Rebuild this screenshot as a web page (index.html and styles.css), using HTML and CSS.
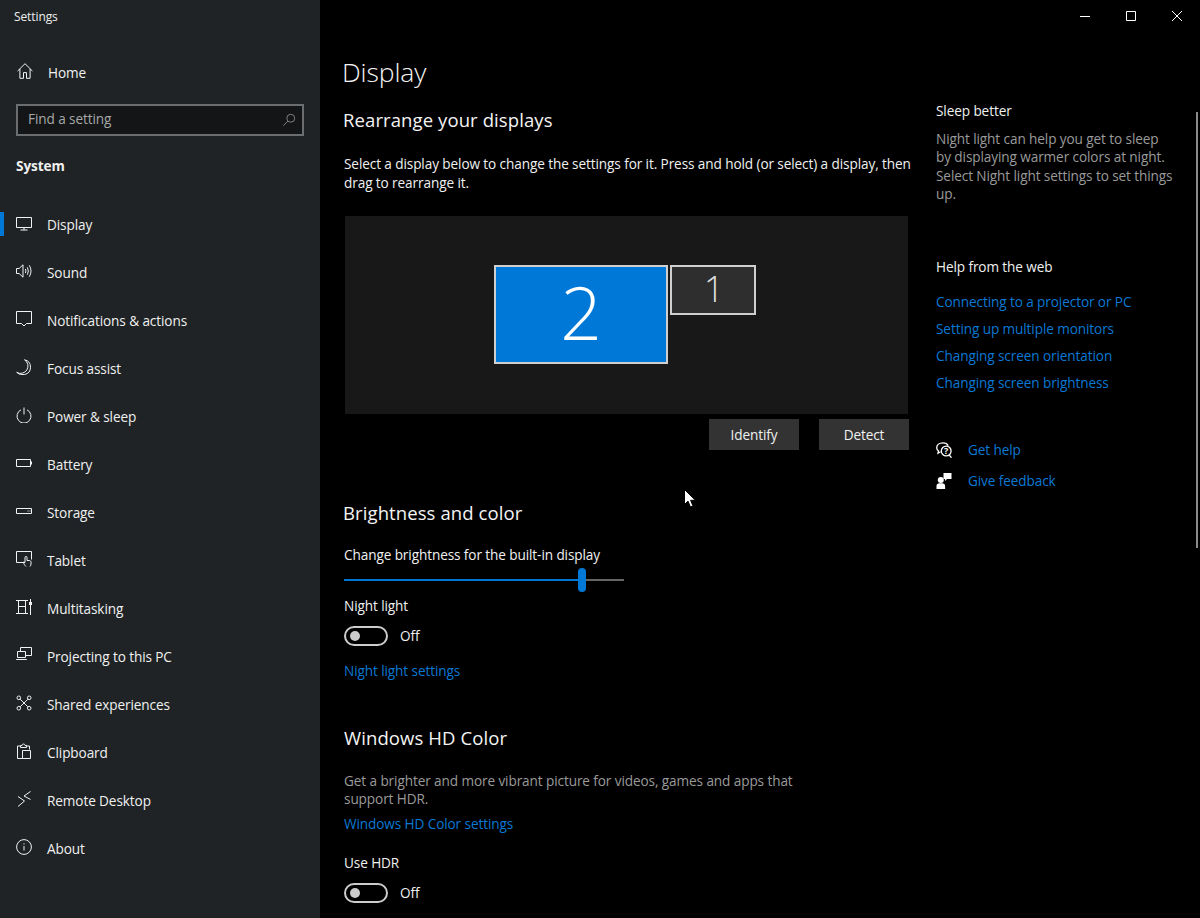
FILE: index.html
```html
<!DOCTYPE html>
<html lang="en">
<head>
<meta charset="utf-8">
<title>Settings</title>
<link rel="stylesheet" href="styles.css">
</head>
<body>
<div class="window">
  <aside class="sidebar">
    <div class="app-title">Settings</div>
    <a class="nav-item home">
      <svg class="ic" viewBox="0 0 16 16"><path d="M.6 8 8 .7 15.4 8M2.900 6v9.300h3.600V9.600h3v5.700h3.600V6"/></svg>
      <span>Home</span>
    </a>
    <div class="search">
      <span>Find a setting</span>
      <svg class="search-ic" viewBox="0 0 16 16"><circle cx="10" cy="6" r="4.500"/><path d="M6.700 9.300 1.500 14.500"/></svg>
    </div>
    <div class="group">System</div>
    <nav class="nav">
      <a class="nav-item active">
        <svg class="ic" viewBox="0 0 16 16"><path d="M.5 2.500h15v10H.5zM8 12.500v2.500M4.500 15h7"/></svg>
        <span>Display</span>
      </a>
      <a class="nav-item">
        <svg class="ic" viewBox="0 0 16 16"><path d="M.5 5.500h2.600L7 1.800v12.400L3.100 10.500H.5zM9.400 6q1.100 2 0 4M11.300 4.300q2.200 3.700 0 7.400M13.300 2.300q3.400 5.700 0 11.400"/></svg>
        <span>Sound</span>
      </a>
      <a class="nav-item">
        <svg class="ic" viewBox="0 0 16 16"><path d="M.5.500h15v12h-5L8 15l-2.500-2.500h-5z"/></svg>
        <span>Notifications &amp; actions</span>
      </a>
      <a class="nav-item">
        <svg class="ic" viewBox="0 0 16 16"><path d="M8.500.8A7.300 7.300 0 0 1 .7 13.300 7.500 7.500 0 0 0 8.500 15.500 7.500 7.500 0 0 0 8.500.8Z"/></svg>
        <span>Focus assist</span>
      </a>
      <a class="nav-item">
        <svg class="ic" viewBox="0 0 16 16"><path d="M5 2.800a7 7 0 1 0 6 0M8 .5v7"/></svg>
        <span>Power &amp; sleep</span>
      </a>
      <a class="nav-item">
        <svg class="ic" viewBox="0 0 16 16"><path d="M.5 4.500h14v7H.5zM15.500 6.500v3"/></svg>
        <span>Battery</span>
      </a>
      <a class="nav-item">
        <svg class="ic" viewBox="0 0 16 16"><path d="M.5 5.500h15v5H.5zM11.500 8h1M13.500 8h1"/></svg>
        <span>Storage</span>
      </a>
      <a class="nav-item">
        <svg class="ic" viewBox="0 0 16 16"><path d="M8.500 11.500H.5v-11h15v8M10 15.500c-1.200-1-2.500-3-2.500-4.500l1.500.5V6.500a1 1 0 0 1 2 0v3h2.500c1 0 1.500.8 1.500 1.500v2c0 1-.5 1.800-1 2.500"/></svg>
        <span>Tablet</span>
      </a>
      <a class="nav-item">
        <svg class="ic" viewBox="0 0 16 16"><path d="M0 1.500h12M0 14.500h12M2.500 1.500v13M9.500 1.500v13M2.500 7.500h7M14.500 0v16"/><rect class="ic-fill" x="13" y="3" width="3" height="3"/></svg>
        <span>Multitasking</span>
      </a>
      <a class="nav-item">
        <svg class="ic" viewBox="0 0 16 16"><path d="M4.500 4V.5h11v8H10M1.500 4.500h8v6h-8zM.2 12.500h10.600"/></svg>
        <span>Projecting to this PC</span>
      </a>
      <a class="nav-item">
        <svg class="ic" viewBox="0 0 16 16"><circle cx="2.800" cy="2.800" r="1.800"/><circle cx="13.200" cy="2.800" r="1.800"/><circle cx="2.800" cy="13.200" r="1.800"/><circle cx="13.200" cy="13.200" r="1.800"/><path d="M4.200 4.200l7.600 7.600M11.800 4.200l-7.600 7.600"/></svg>
        <span>Shared experiences</span>
      </a>
      <a class="nav-item">
        <svg class="ic" viewBox="0 0 16 16"><path d="M6.500 15.500H1.500V3h3M10 3h3.500v3.500M4.500 4.500V2.500h1.500a1.500 1.500 0 0 1 3 0h1.500v2zM6.500 7.500h8v8h-8z"/></svg>
        <span>Clipboard</span>
      </a>
      <a class="nav-item">
        <svg class="ic" viewBox="0 0 16 16"><path d="M2 5.500 8.500 10 2 15.500M14.500.5 8 5l6.500 3.500"/></svg>
        <span>Remote Desktop</span>
      </a>
      <a class="nav-item">
        <svg class="ic" viewBox="0 0 16 16"><circle cx="8" cy="8" r="7.400"/><path d="M8 7v4.500M8 4.300v1.200"/></svg>
        <span>About</span>
      </a>
    </nav>
  </aside>

  <main class="main">
    <section class="content">
      <h1 class="page-title">Display</h1>
      <h2 class="heading rearrange">Rearrange your displays</h2>
      <p class="text desc">Select a display below to change the settings for it. Press and hold (or select) a display, then drag to rearrange it.</p>
      <div class="canvas">
        <div class="monitor big">2</div>
        <div class="monitor small">1</div>
      </div>
      <div class="actions">
        <button class="btn">Identify</button>
        <button class="btn">Detect</button>
      </div>
      <h2 class="heading brightness">Brightness and color</h2>
      <div class="text label-b">Change brightness for the built-in display</div>
      <div class="slider"><div class="slider-fill"></div><div class="slider-thumb"></div><div class="slider-rest"></div></div>
      <div class="text label-n">Night light</div>
      <div class="toggle-row"><span class="toggle"><span class="knob"></span></span><span class="text">Off</span></div>
      <a class="link nl-link">Night light settings</a>
      <h2 class="heading hd">Windows HD Color</h2>
      <p class="muted hd-desc">Get a brighter and more vibrant picture for videos, games and apps that support HDR.</p>
      <a class="link hd-link">Windows HD Color settings</a>
      <div class="text label-h">Use HDR</div>
      <div class="toggle-row"><span class="toggle"><span class="knob"></span></span><span class="text">Off</span></div>
    </section>
    <aside class="side">
      <div class="text side-head">Sleep better</div>
      <p class="muted side-desc">Night light can help you get to sleep by displaying warmer colors at night. Select Night light settings to set things up.</p>
      <div class="text side-head web">Help from the web</div>
      <ul class="links">
        <li><a class="link">Connecting to a projector or PC</a></li>
        <li><a class="link">Setting up multiple monitors</a></li>
        <li><a class="link">Changing screen orientation</a></li>
        <li><a class="link">Changing screen brightness</a></li>
      </ul>
      <div class="help-row first">
        <svg class="help-ic" viewBox="0 0 16 16"><path class="o" d="M7 .8C3.200.8.700 3 .700 5.700c0 1.400.7 2.500 1.800 3.300L2 11.200l2.600-1.400"/><path class="o" d="M7 .8c2.300 0 4.300 1 5.200 2.800"/><circle class="o" cx="10.200" cy="9" r="4.900"/><path class="o" d="M13.200 13l2.300 2.700"/><text x="10.200" y="12.200" class="q">?</text></svg>
        <a class="link">Get help</a>
      </div>
      <div class="help-row">
        <svg class="help-ic" viewBox="0 0 16 16"><path class="f" d="M7.500 0h8v6H11L9 8V6H7.500z"/><circle class="f" cx="4.800" cy="7" r="3"/><path class="f" d="M.5 16v-3c0-1.700 1.300-2.700 2.800-2.700h3c1.500 0 2.800 1 2.800 2.700v3z"/></svg>
        <a class="link">Give feedback</a>
      </div>
    </aside>
  </main>

  <div class="controls">
    <svg viewBox="0 0 46 32" class="ctl"><path d="M18 16.500h10"/></svg>
    <svg viewBox="0 0 46 32" class="ctl"><path d="M18.500 11.500h9v9h-9z"/></svg>
    <svg viewBox="0 0 46 32" class="ctl"><path d="M18 11l10 10M28 11 18 21"/></svg>
  </div>
  <div class="scrollbar"></div>
  <svg class="cursor" viewBox="0 0 12 19"><path d="M.5.5v15l3.500-3.400 2.400 5.800 2.600-1-2.400-5.600h4.800z"/></svg>
</div>
</body>
</html>
```

FILE: styles.css
```css
* { box-sizing: border-box; }
html, body { margin: 0; height: 100%; background: #000; overflow: hidden; }
body { font-family: "Open Sans", "Noto Sans", sans-serif; color: #fff; letter-spacing: -0.1px; }
a { text-decoration: none; color: inherit; }
p, h1, h2, ul { margin: 0; padding: 0; }
ul { list-style: none; }

.window { position: relative; display: flex; width: 1200px; height: 918px; overflow: hidden; }

.sidebar { width: 320px; flex: none; background: #1f2325; display: flex; flex-direction: column; }
.app-title { font-size: 12px; line-height: 16px; padding: 9px 0 0 14px; height: 48px; color: #eee; }
.nav-item { display: flex; align-items: center; height: 48px; padding-left: 16px; font-size: 13.6px; color: #f0f0f0; position: relative; }
.nav-item span { margin-left: 15px; }
.ic { width: 16px; height: 16px; flex: none; margin-top: -2px; fill: none; stroke: #f2f2f2; stroke-width: 1; }
.ic-fill { fill: #f2f2f2; stroke: none; }
.home { padding-left: 17px; }
.search { margin: 8px 16px 0; height: 32px; border: 2px solid #6b6e70; background: #131517; display: flex; align-items: center; justify-content: space-between; padding: 0 6px 3px 10px; font-size: 13.6px; color: #a8a8a8; }
.search-ic { width: 14px; height: 14px; margin-top: 3px; fill: none; stroke: #8f8f8f; stroke-width: 1; }
.group { font-size: 13.6px; font-weight: 700; line-height: 20px; padding: 20px 0 0 16px; height: 64px; color: #f0f0f0; }
.nav { display: flex; flex-direction: column; }
.active::before { content: ""; position: absolute; left: 0; top: 12px; width: 4px; height: 24px; background: #0078d7; }

.main { flex: 1; display: flex; padding: 52px 0 0 24px; min-width: 0; }
.content { width: 565px; flex: none; }
.page-title { font-size: 26.5px; font-weight: 300; line-height: 40px; margin-left: -2px; color: #f4f4f4; }
.heading { font-size: 18.5px; font-weight: 400; line-height: 28px; color: #f4f4f4; letter-spacing: 0.1px; }
.rearrange { margin: 14px 0 0 -1px; }
.text { font-size: 13.6px; line-height: 20px; color: #f0f0f0; }
.desc { line-height: 19px; margin-top: 20px; margin-right: -6px; }
.canvas { margin: 24px 0 0 1px; width: 563px; height: 198px; background: #181818; display: flex; align-items: flex-start; gap: 2px; padding: 49px 0 0 149px; }
.monitor { border: 2px solid #cfcfcf; display: flex; align-items: center; justify-content: center; font-weight: 300; line-height: 1; }
.big { width: 174px; height: 99px; background: #0078d7; font-size: 73px; padding-bottom: 6px; }
.small { width: 86px; height: 50px; background: #2e2e2e; font-size: 36px; color: #ddd; padding: 0 0 2px 2px; }
.actions { display: flex; justify-content: flex-end; gap: 20px; margin-top: 5px; }
.btn { width: 90px; height: 31px; border: 0; padding: 0; background: #333; color: #f0f0f0; font: inherit; font-size: 13.6px; letter-spacing: -0.1px; }
.brightness { margin: 49px 0 0 -1px; }
.label-b { margin-top: 18px; }
.slider { display: flex; align-items: center; width: 280px; height: 24px; margin-top: 3px; }
.slider-fill { width: 234px; height: 2px; background: #0078d7; }
.slider-thumb { width: 8px; height: 24px; border-radius: 4px; background: #0078d7; }
.slider-rest { flex: 1; height: 2px; background: #666; }
.label-n { margin-top: 4px; }
.toggle-row { display: flex; align-items: center; gap: 12px; height: 20px; margin-top: 10px; }
.toggle { width: 44px; height: 20px; border: 2px solid #ccc; border-radius: 10px; display: flex; align-items: center; padding-left: 4px; }
.knob { width: 10px; height: 10px; border-radius: 50%; background: #ccc; }
.link { display: block; font-size: 13.6px; line-height: 20px; color: #0a78d4; }
.nl-link { margin-top: 15px; }
.hd { margin-top: 43px; }
.muted { font-size: 13.6px; line-height: 18.4px; color: #9a9a9a; }
.hd-desc { margin-top: 20px; width: 460px; }
.hd-link { margin-top: 5px; }
.label-h { margin-top: 19px; }

.side { width: 240px; margin-left: 27px; padding-top: 49px; }
.side-desc { margin-top: 9px; }
.web { margin-top: 53px; }
.links { margin-top: 15px; display: flex; flex-direction: column; gap: 7px; }
.help-row { display: flex; align-items: center; gap: 16px; height: 20px; margin-top: 11px; }
.help-row.first { margin-top: 47px; }
.help-ic { width: 16px; height: 16px; flex: none; }
.help-ic .o { fill: none; stroke: #fff; stroke-width: 1.3; }
.help-ic .f { fill: #fff; }
.help-ic .q { font-size: 9px; font-weight: 700; fill: #fff; text-anchor: middle; }

.controls { position: absolute; top: 0; right: 0; display: flex; }
.ctl { width: 46px; height: 32px; fill: none; stroke: #fff; stroke-width: 1; }
.scrollbar { position: absolute; right: 2px; top: 112px; width: 2px; height: 436px; background: #8a8a8a; }
.cursor { position: absolute; left: 684px; top: 489px; width: 12px; height: 19px; fill: #fff; stroke: #000; stroke-width: 1; }
```
